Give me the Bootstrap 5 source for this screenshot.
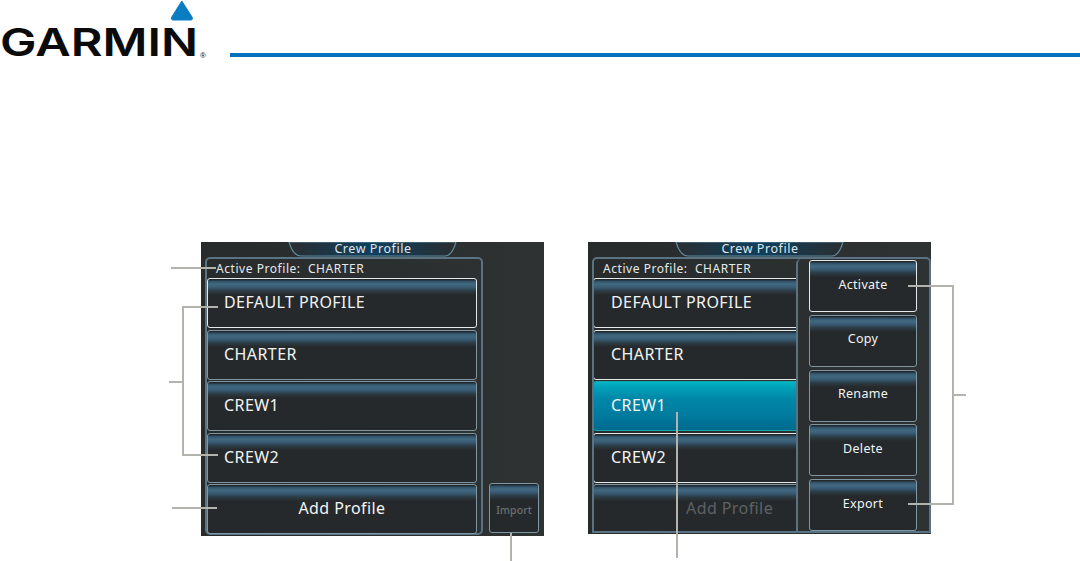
<!DOCTYPE html>
<html lang="en">
<head>
<meta charset="utf-8">
<title>Crew Profile</title>
<link rel="stylesheet" href="https://cdn.jsdelivr.net/npm/bootstrap@5.3.0/dist/css/bootstrap.min.css">
<style>
html, body { height: 561px; overflow: hidden; background: #fff; }
body { font-family: "Noto Sans", "Open Sans", sans-serif; position: relative; }
.logo-svg { display: block; flex: 0 0 230px; }
.logo-word { font-family: Inter, "Liberation Sans", sans-serif; font-weight: 600; font-size: 38.5px; fill: #0b0b0b; }
.logo-reg { font-family: "Liberation Sans", sans-serif; font-size: 8px; fill: #0b0b0b; }
.head-band { height: 70px; }
.head-rule { height: 4px; margin-top: 53px; background: #0071bc; }
.screens { padding-left: 201px; margin-top: 172px; gap: 44px; }
.scr { width: 343px; height: 294px; background: linear-gradient(90deg, #272b2c 0%, #2e3233 100%); }
.scr-b { height: 292px; }
.scr-tab { position: relative; width: 170px; height: 14px; margin-left: 87px; color: #dfe6ea; font-size: 12.5px; line-height: 13px; text-align: center; letter-spacing: .55px; }
.scr-tab svg { position: absolute; left: 0; top: 0; z-index: 0; }
.scr-tab span { position: relative; z-index: 1; }
.grp { margin: 1px 0 0 4px; width: 278px; height: 278px; border: 2px solid #5a7382; border-radius: 5px; padding: 0; }
.grp-wide { width: 339px; height: 276px; border-bottom-left-radius: 0; border-bottom-right-radius: 0; padding: 0; }
.act-line { height: 19px; font-size: 12px; line-height: 20px; color: #e6e9ea; padding-left: 9px; white-space: nowrap; letter-spacing: .55px; }
.stack { gap: 1.5px; }
.cbtn { display: flex; align-items: center; height: 50px; width: 270px; padding: 0 0 2px 16px; font-size: 16px; letter-spacing: .42px; color: #f2f4f4; border: 1px solid #7f97a5; border-radius: 3px; background: linear-gradient(180deg, #22272a 0, #22272a 1px, #2f4f66 2px, #41697f 5px, #3a5d76 8px, #2b3b45 12px, #26292b 16px, #26292b 100%); box-shadow: none; }
.cbtn:hover, .cbtn:active, .cbtn:focus { color: #f2f4f4; border-color: #7f97a5; background: linear-gradient(180deg, #22272a 0, #22272a 1px, #2f4f66 2px, #41697f 5px, #3a5d76 8px, #2b3b45 12px, #26292b 16px, #26292b 100%); }
.cbtn-lit { border-color: #e4e9ec; }
.cbtn-ctr { justify-content: center; padding: 0 0 2px 0; }
.cbtn-off, .cbtn-off:hover { color: #5e6263; }
.cbtn-sel, .cbtn-sel:hover { border-color: #16a6a8; background: linear-gradient(180deg, #00b4c4 0, #00a0b8 6px, #0088a8 16px, #007a9e 34px, #006a8e 100%); color: #f2f4f4; }
.cbtn-imp, .cbtn-imp:hover { width: 50px; height: 50px; margin: 0 5px 3px auto; align-self: flex-end; font-size: 10.5px; font-weight: 500; letter-spacing: .1px; padding: 6px 0 0; justify-content: center; color: #6b6f70; }
.list-col { width: 202px; overflow: hidden; flex: 0 0 202px; }
.list-col .cbtn { width: 270px; margin-left: -1px; padding-left: 17px; }
.list-col .cbtn-ctr { justify-content: flex-start; padding-left: 92px; }
.act-col { flex: 1 1 auto; border-left: 2px solid #5a7382; border-top-left-radius: 5px; padding: 1px 0 0 11px; gap: 2.75px; }
.act-col .cbtn { width: 108px; height: 52px; padding: 0 0 2px 0; justify-content: center; font-size: 12.5px; letter-spacing: .3px; }
.leaders { position: absolute; left: 0; top: 0; pointer-events: none; }
.leaders path { fill: none; stroke: #b3b3ae; stroke-width: 2; }
</style>
</head>
<body>
<header class="d-flex head-band">
  <svg class="logo-svg" width="230" height="70" viewBox="0 0 230 70" role="img" aria-label="Garmin">
    <path d="M181.8 1 L192 17 Q193.4 20 190.4 20 L173.4 20 Q170.4 20 171.8 17 L181.8 1 Z" fill="#0a7cc1" stroke="#0a7cc1" stroke-linejoin="round"/>
    <text class="logo-word" x="0" y="56" textLength="198" lengthAdjust="spacingAndGlyphs">GARMIN</text>
    <text class="logo-reg" x="200" y="58">®</text>
  </svg>
  <div class="head-rule flex-grow-1"></div>
</header>

<main class="d-flex screens">
  <section class="scr d-flex flex-column">
    <div class="scr-tab">
      <svg width="170" height="15" viewBox="0 0 170 15"><defs><linearGradient id="tg1" x1="0" x2="1" y1="0" y2="0"><stop offset="0" stop-color="#2a2e30"/><stop offset=".5" stop-color="#0f3f5e"/><stop offset="1" stop-color="#2a2e30"/></linearGradient></defs><path d="M1 0 C3 7 6 14 13 14 L157 14 C163 14 166 7 168 0 Z" fill="url(#tg1)" stroke="#5f8a9e" stroke-width="1.2"/></svg>
      <span>Crew Profile</span>
    </div>
    <div class="d-flex flex-grow-1">
      <div class="grp d-flex flex-column">
        <div class="act-line">Active Profile:&nbsp; CHARTER</div>
        <div class="d-flex flex-column stack">
          <button class="btn cbtn cbtn-lit">DEFAULT PROFILE</button>
          <button class="btn cbtn">CHARTER</button>
          <button class="btn cbtn">CREW1</button>
          <button class="btn cbtn">CREW2</button>
          <button class="btn cbtn cbtn-ctr">Add Profile</button>
        </div>
      </div>
      <button class="btn cbtn cbtn-imp">Import</button>
    </div>
  </section>

  <section class="scr scr-b d-flex flex-column">
    <div class="scr-tab">
      <svg width="170" height="15" viewBox="0 0 170 15"><defs><linearGradient id="tg2" x1="0" x2="1" y1="0" y2="0"><stop offset="0" stop-color="#2a2e30"/><stop offset=".5" stop-color="#0f3f5e"/><stop offset="1" stop-color="#2a2e30"/></linearGradient></defs><path d="M1 0 C3 7 6 14 13 14 L157 14 C163 14 166 7 168 0 Z" fill="url(#tg2)" stroke="#5f8a9e" stroke-width="1.2"/></svg>
      <span>Crew Profile</span>
    </div>
    <div class="grp grp-wide d-flex">
      <div class="list-col">
        <div class="act-line">Active Profile:&nbsp; CHARTER</div>
        <div class="d-flex flex-column stack">
          <button class="btn cbtn cbtn-lit">DEFAULT PROFILE</button>
          <button class="btn cbtn cbtn-lit">CHARTER</button>
          <button class="btn cbtn cbtn-sel">CREW1</button>
          <button class="btn cbtn cbtn-lit">CREW2</button>
          <button class="btn cbtn cbtn-ctr cbtn-off">Add Profile</button>
        </div>
      </div>
      <div class="act-col d-flex flex-column">
        <button class="btn cbtn cbtn-lit">Activate</button>
        <button class="btn cbtn">Copy</button>
        <button class="btn cbtn">Rename</button>
        <button class="btn cbtn">Delete</button>
        <button class="btn cbtn">Export</button>
      </div>
    </div>
  </section>
</main>

<svg class="leaders" width="1080" height="561" viewBox="0 0 1080 561" aria-hidden="true">
  <path d="M171 268 H216"/>
  <path d="M218 307 H183 V455 H218"/>
  <path d="M169 382 H183"/>
  <path d="M172 508 H217"/>
  <path d="M511 533 V561"/>
  <path d="M908 286 H953 V504 H908"/>
  <path d="M953 395 H966"/>
  <path d="M677 412 V558"/>
</svg>
</body>
</html>
